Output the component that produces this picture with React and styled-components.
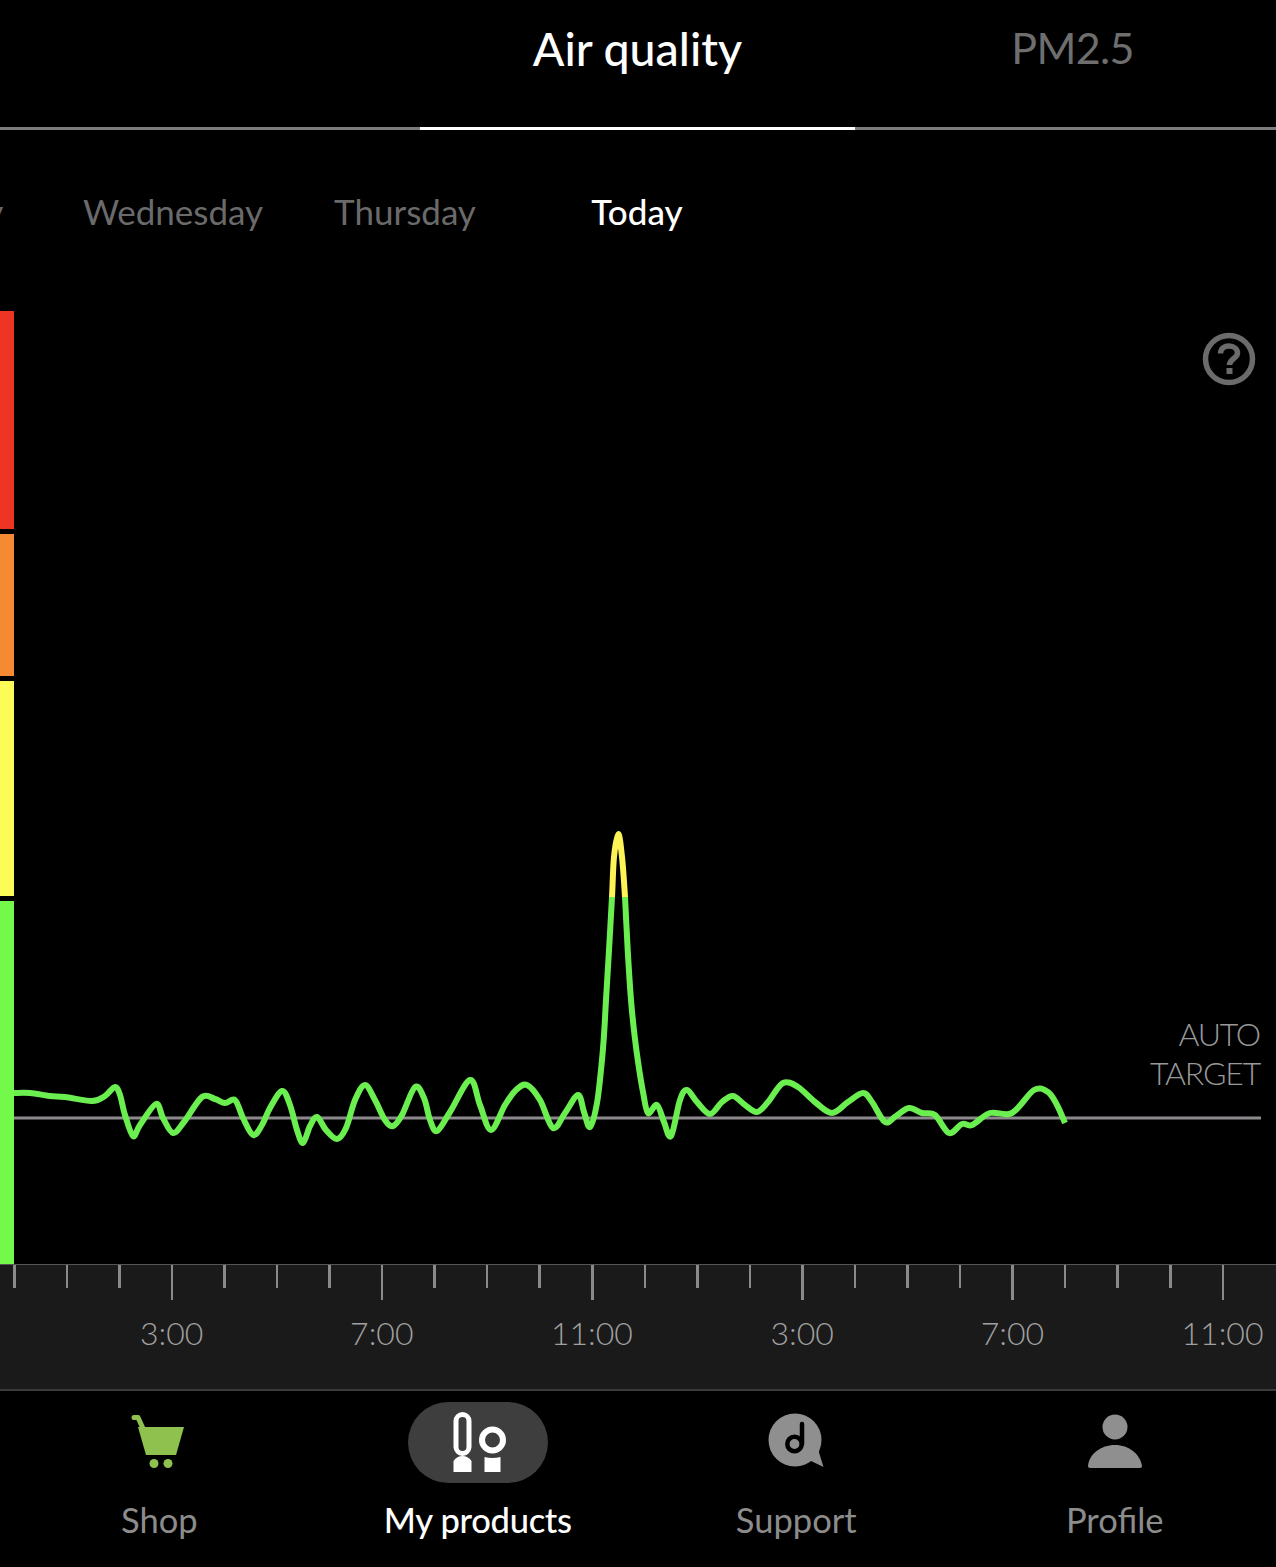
import React from "react";
import styled, { createGlobalStyle } from "styled-components";

const days = ["Tuesday", "Wednesday", "Thursday", "Today"];
const hours = ["3:00", "7:00", "11:00", "3:00", "7:00", "11:00"];
const ticks = Array.from({ length: 24 }, (_, i) => i);

// readings in page pixels, the chart is drawn with a matching viewBox
const readings = [
  [14, 1093], [30, 1093], [50, 1096], [65, 1097], [92, 1101], [105, 1096], [115, 1087], [120, 1095],
  [125, 1115], [133, 1136], [140, 1125], [156, 1104], [163, 1118], [173, 1133], [184, 1122], [202, 1097],
  [215, 1099], [225, 1103], [235, 1100], [243, 1118], [253, 1135], [262, 1125], [270, 1108], [282, 1091],
  [290, 1105], [297, 1130], [303, 1143], [310, 1126], [317, 1117], [326, 1130], [337, 1139], [346, 1128],
  [355, 1100], [365, 1085], [375, 1100], [385, 1120], [393, 1126], [402, 1115], [415, 1087], [424, 1098],
  [430, 1120], [437, 1131], [450, 1112], [470, 1080], [480, 1105], [491, 1130], [505, 1105], [516, 1090], [527, 1085],
  [540, 1100], [553, 1128], [565, 1113], [578, 1095], [584, 1112], [590, 1127], [597, 1103], [601.5, 1065], [604, 1035],
  [606, 1000], [609, 950], [612, 897], [614, 857], [618.3, 834], [622, 857], [625, 897], [627.7, 950], [631, 1000],
  [634.5, 1035], [638.5, 1065], [643, 1092], [648, 1113], [657, 1105], [664, 1122], [671, 1136], [680, 1100], [687, 1090], [697, 1102],
  [710, 1114], [722, 1102], [733, 1096], [745, 1105], [757, 1112], [768, 1102], [783, 1083], [798, 1087],
  [815, 1102], [832, 1113], [848, 1102], [863, 1093], [872, 1102], [885, 1122], [896, 1116], [909, 1108],
  [922, 1113], [935, 1115], [949, 1133], [962, 1124], [972, 1125], [990, 1113], [1012, 1113], [1034, 1090],
  [1048, 1092], [1057, 1105], [1065, 1123],
];

const smoothPath = (pts) => {
  let d = `M${pts[0][0]} ${pts[0][1]}`;
  for (let i = 0; i < pts.length - 1; i++) {
    const p0 = pts[i - 1] || pts[i];
    const p1 = pts[i];
    const p2 = pts[i + 1];
    const p3 = pts[i + 2] || p2;
    const c1x = p1[0] + (p2[0] - p0[0]) / 6;
    const c1y = p1[1] + (p2[1] - p0[1]) / 6;
    const c2x = p2[0] - (p3[0] - p1[0]) / 6;
    const c2y = p2[1] - (p3[1] - p1[1]) / 6;
    d += `C${c1x} ${c1y} ${c2x} ${c2y} ${p2[0]} ${p2[1]}`;
  }
  return d;
};

const CartIcon = () => (
  <IconSvg viewBox="0 0 140 81">
    <path d="M45 15.5h4l5 11" fill="none" stroke="#8fc14f" strokeWidth="5" strokeLinecap="round" strokeLinejoin="round" />
    <path d="M49 25H95L87 53H57Z" fill="#8fc14f" />
    <circle cx="65" cy="61.5" r="4.5" fill="#8fc14f" />
    <circle cx="79" cy="61.5" r="4.5" fill="#8fc14f" />
  </IconSvg>
);

const ProductsIcon = () => (
  <IconSvg viewBox="0 0 140 81">
    <rect x="48" y="12.5" width="13" height="39" rx="6.5" fill="none" stroke="#fff" strokeWidth="5" />
    <path d="M45.5 70V59Q49 54 54.5 54Q60 54 63.5 59V70Z" fill="#fff" />
    <circle cx="84.5" cy="38" r="10.5" fill="none" stroke="#fff" strokeWidth="6" />
    <path d="M76.5 55Q84.5 57 92.5 55V70H76.5Z" fill="#fff" />
  </IconSvg>
);

const SupportIcon = () => (
  <IconSvg viewBox="0 0 140 81">
    <circle cx="69" cy="38" r="26.5" fill="#8f8f8f" />
    <path d="M83 58L91 44L97.5 65Z" fill="#8f8f8f" />
    <path d="M76 22V42" fill="none" stroke="#000" strokeWidth="4.5" strokeLinecap="round" />
    <circle cx="68.5" cy="42" r="7.2" fill="none" stroke="#000" strokeWidth="4.5" />
  </IconSvg>
);

const ProfileIcon = () => (
  <IconSvg viewBox="0 0 140 81">
    <ellipse cx="70" cy="25" rx="12.5" ry="12.5" fill="#8f8f8f" />
    <path d="M43 64C44 52 56 43 70 43C84 43 95 52 97 64Q97 66 95 66H45Q43 66 43 64Z" fill="#8f8f8f" />
  </IconSvg>
);

const navItems = [
  { label: "Shop", Icon: CartIcon },
  { label: "My products", Icon: ProductsIcon, active: true },
  { label: "Support", Icon: SupportIcon },
  { label: "Profile", Icon: ProfileIcon },
];

const App = () => {
  return (
    <Page>
      <GlobalStyle />
      <Tabs>
        <Tab $active>Air quality</Tab>
        <Tab>PM2.5</Tab>
      </Tabs>
      <DayRow>
        {days.map((day) => (
          <Day key={day} $active={day === "Today"}>
            {day}
          </Day>
        ))}
      </DayRow>
      <ChartArea>
        <LevelBar>
          <Level $color="#ee3524" $height={218} />
          <Level $color="#f58a33" $height={142} />
          <Level $color="#fdfb57" $height={215} />
          <Level $color="#72f94a" $height={363} />
        </LevelBar>
        <Chart viewBox="14 300 1262 964">
          <defs>
            <linearGradient id="lineColor" gradientUnits="userSpaceOnUse" x1="0" y1="830" x2="0" y2="1150">
              <stop offset="0.2093" stopColor="#fdf356" />
              <stop offset="0.2093" stopColor="#6bee50" />
            </linearGradient>
          </defs>
          <line x1="14" y1="1118" x2="1261" y2="1118" stroke="#8d8a8d" strokeWidth="3" />
          <path d={smoothPath(readings)} fill="none" stroke="url(#lineColor)" strokeWidth="6" strokeLinejoin="round" />
        </Chart>
        <HelpIcon viewBox="0 0 56 56">
          <circle cx="28" cy="28" r="23.5" fill="none" stroke="#6b6b6b" strokeWidth="5.5" />
          <path d="M19.5 22.5C19.5 17.5 23.5 15 28 15C33 15 36.5 18 36.5 22C36.5 27.5 28.5 27.5 28.5 34" fill="none" stroke="#6b6b6b" strokeWidth="5.5" />
          <rect x="25.5" y="37" width="6" height="6" fill="#6b6b6b" />
        </HelpIcon>
        <TargetLabel>
          AUTO
          <br />
          TARGET
        </TargetLabel>
      </ChartArea>
      <Axis>
        <TickRow>
          {ticks.map((tick) => (
            <Tick key={tick} $long={tick % 4 === 3} />
          ))}
        </TickRow>
        <HourRow>
          {hours.map((hour, i) => (
            <Hour key={i}>{hour}</Hour>
          ))}
        </HourRow>
      </Axis>
      <Nav>
        {navItems.map(({ label, Icon, active }) => (
          <NavItem key={label}>
            <IconSlot $active={active}>
              <Icon />
            </IconSlot>
            <NavLabel $active={active}>{label}</NavLabel>
          </NavItem>
        ))}
      </Nav>
    </Page>
  );
};

export default App;

const GlobalStyle = createGlobalStyle`
  html, body {
    margin: 0;
    padding: 0;
    background: #000;
  }
`;

const Page = styled.div`
  width: 1276px;
  height: 1567px;
  display: flex;
  flex-direction: column;
  overflow: hidden;
  background: #000;
  font-family: "Lato", "Liberation Sans", sans-serif;
`;

const Tabs = styled.div`
  flex: none;
  height: 127px;
  display: flex;
  padding-left: 420px;
  border-bottom: 3px solid #7c7c7c;
`;

const Tab = styled.div`
  flex: none;
  width: 435px;
  height: 130px;
  display: flex;
  align-items: flex-start;
  justify-content: center;
  box-sizing: border-box;
  padding-top: 19px;
  font-size: ${(props) => (props.$active ? 46.5 : 43)}px;
  font-weight: ${(props) => (props.$active ? 500 : 400)};
  letter-spacing: ${(props) => (props.$active ? 0 : -0.7)}px;
  line-height: 58px;
  color: ${(props) => (props.$active ? "#fff" : "#6e6e6e")};
  border-bottom: 3px solid ${(props) => (props.$active ? "#fff" : "transparent")};
`;

const DayRow = styled.div`
  flex: none;
  height: 170px;
  display: flex;
  justify-content: flex-end;
  padding-right: 523px;
  box-sizing: border-box;
  overflow: hidden;
`;

const Day = styled.div`
  flex: none;
  width: 232px;
  padding-top: 58px;
  text-align: center;
  font-size: 35px;
  font-weight: ${(props) => (props.$active ? 500 : 400)};
  line-height: 46px;
  color: ${(props) => (props.$active ? "#fff" : "#6a6a6a")};
`;

const ChartArea = styled.div`
  flex: none;
  height: 964px;
  position: relative;
  display: flex;
`;

const LevelBar = styled.div`
  flex: none;
  width: 14px;
  padding-top: 11px;
  display: flex;
  flex-direction: column;
  gap: 5px;
`;

const Level = styled.div`
  flex: none;
  height: ${(props) => props.$height}px;
  background: ${(props) => props.$color};
`;

const Chart = styled.svg`
  flex: 1;
  height: 964px;
  display: block;
`;

const HelpIcon = styled.svg`
  position: absolute;
  left: 1201px;
  top: 31px;
  width: 56px;
  height: 56px;
`;

const TargetLabel = styled.div`
  position: absolute;
  right: 16px;
  top: 714px;
  text-align: right;
  font-size: 32px;
  font-weight: 300;
  letter-spacing: -1.2px;
  line-height: 39px;
  color: #999;
`;

const Axis = styled.div`
  flex: none;
  height: 127px;
  box-sizing: border-box;
  background: #1a1a1a;
  border-top: 1px solid #555;
  border-bottom: 2px solid #3a3a3a;
  overflow: hidden;
`;

const TickRow = styled.div`
  height: 35px;
  display: flex;
  padding-left: 13px;
  gap: 50.05px;
`;

const Tick = styled.div`
  flex: none;
  width: 2.5px;
  height: ${(props) => (props.$long ? 35 : 23)}px;
  background: #8a8a8a;
`;

const HourRow = styled.div`
  display: flex;
  padding: 13px 0 0 66.5px;
`;

const Hour = styled.div`
  flex: none;
  width: 210.2px;
  text-align: center;
  font-size: 32px;
  font-weight: 300;
  line-height: 40px;
  color: #a0a0a0;
`;

const Nav = styled.nav`
  flex: 1;
  display: grid;
  grid-template-columns: repeat(4, 1fr);
  padding-right: 2px;
`;

const NavItem = styled.div`
  display: flex;
  flex-direction: column;
  align-items: center;
  padding-top: 11px;
`;

const IconSlot = styled.div`
  width: 140px;
  height: 81px;
  border-radius: 41px;
  background: ${(props) => (props.$active ? "#3e3e3e" : "transparent")};
`;

const IconSvg = styled.svg`
  display: block;
  width: 140px;
  height: 81px;
`;

const NavLabel = styled.div`
  margin-top: 14px;
  font-size: 34.5px;
  font-weight: ${(props) => (props.$active ? 500 : 400)};
  letter-spacing: ${(props) => (props.$active ? -0.3 : 0)}px;
  line-height: 46px;
  color: ${(props) => (props.$active ? "#fff" : "#8c8c8c")};
`;
